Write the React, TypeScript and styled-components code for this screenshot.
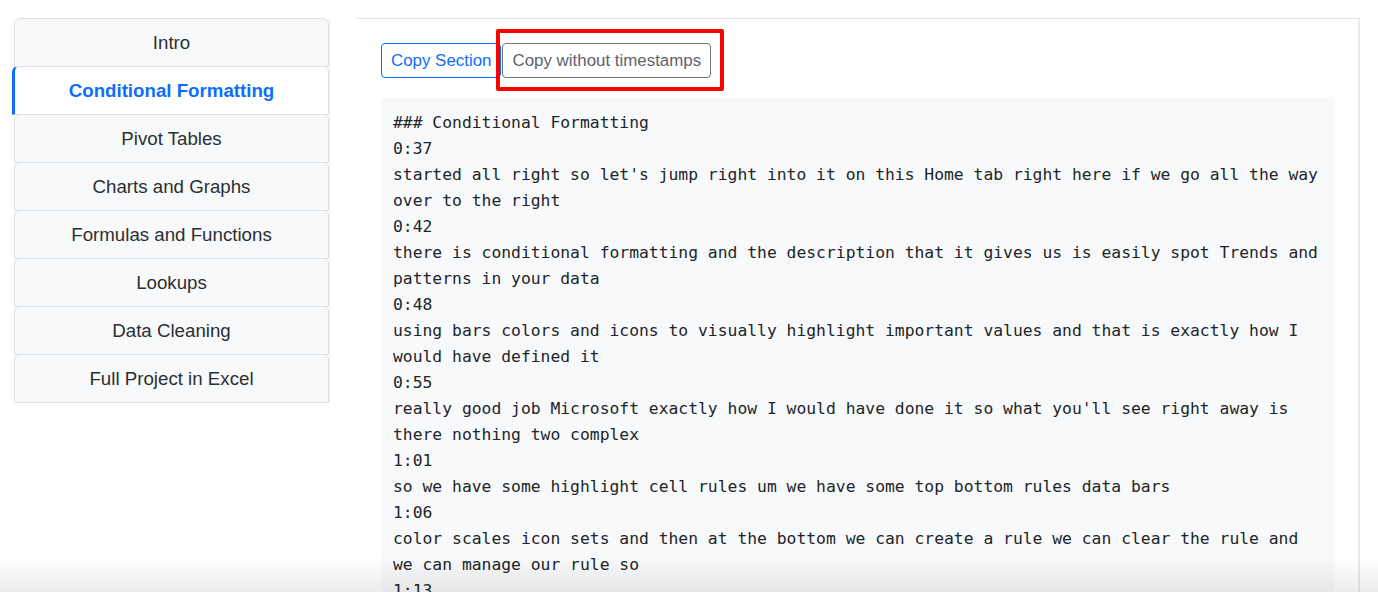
import React from "react";
import styled, { createGlobalStyle } from "styled-components";

const Global = createGlobalStyle`
  html, body {
    margin: 0;
    padding: 0;
    background: #ffffff;
    overflow: hidden;
  }
  body {
    font-family: "Liberation Sans", Arial, sans-serif;
    color: #212529;
  }
`;

const Page = styled.div`
  display: flex;
  align-items: flex-start;
  gap: 28px;
  padding: 18px 0 0 14px;
  height: 574px;
`;

const Sidebar = styled.nav`
  display: flex;
  flex-direction: column;
  width: 315px;
  flex-shrink: 0;
  box-shadow: 2px 0 0 -1px #eceef2;
`;

const TabItem = styled.div<{ $active?: boolean }>`
  display: flex;
  align-items: center;
  justify-content: center;
  box-sizing: content-box;
  height: 46px;
  padding-top: 1px;
  margin-bottom: -1px;
  border: 1px solid #dee2e6;
  border-top-left-radius: 6px;
  border-top-right-radius: 6px;
  background: ${(p) => (p.$active ? "#ffffff" : "#f8f9fa")};
  font-size: 18.7px;
  font-weight: ${(p) => (p.$active ? 700 : 400)};
  color: ${(p) => (p.$active ? "#0d6efd" : "#2b2f33")};
  ${(p) =>
    p.$active
      ? `border-left: 3px solid #0d6efd; margin-left: -2px; position: relative; z-index: 1;`
      : ""}
  &:last-child {
    margin-bottom: 0;
  }
`;

const Main = styled.main`
  width: 1003px;
  height: 100%;
  box-sizing: border-box;
  border-top: 1px solid #dde2e8;
  border-right: 2px solid #e9ecef;
  padding: 24px 23px 0 24px;
  display: flex;
  flex-direction: column;
  gap: 19px;
`;

const ButtonRow = styled.div`
  position: relative;
  display: flex;
  gap: 1px;
`;

const Button = styled.button<{ $variant: "primary" | "secondary" }>`
  height: 35px;
  padding: 2px 9px 0;
  background: #ffffff;
  border: 1px solid ${(p) => (p.$variant === "primary" ? "#0d6efd" : "#6c757d")};
  color: ${(p) => (p.$variant === "primary" ? "#0d6efd" : "#5c636a")};
  border-radius: 4px;
  font-family: "Liberation Sans", Arial, sans-serif;
  font-size: 16.9px;
  line-height: 1;
  cursor: pointer;
`;

const Highlight = styled.div`
  position: absolute;
  left: 115px;
  top: -14px;
  width: 228px;
  height: 62px;
  box-sizing: border-box;
  border: 4px solid #ff0000;
  border-radius: 2px;
  pointer-events: none;
`;

const Transcript = styled.pre`
  margin: 0;
  padding: 13px 12px 12px;
  background: #f8f9fa;
  border-radius: 6px;
  font-family: "DejaVu Sans Mono", "Liberation Mono", monospace;
  font-size: 16.35px;
  line-height: 26px;
  color: #212529;
  white-space: pre;
  overflow: hidden;
  flex: 1;
`;

const BottomFade = styled.div`
  position: fixed;
  left: 0;
  right: 0;
  bottom: 0;
  height: 36px;
  pointer-events: none;
  background: linear-gradient(to bottom, rgba(0, 0, 0, 0), rgba(0, 0, 0, 0.07));
`;

const tabs = [
  "Intro",
  "Conditional Formatting",
  "Pivot Tables",
  "Charts and Graphs",
  "Formulas and Functions",
  "Lookups",
  "Data Cleaning",
  "Full Project in Excel",
];

const lines = [
  "### Conditional Formatting",
  "0:37",
  "started all right so let's jump right into it on this Home tab right here if we go all the way",
  "over to the right",
  "0:42",
  "there is conditional formatting and the description that it gives us is easily spot Trends and",
  "patterns in your data",
  "0:48",
  "using bars colors and icons to visually highlight important values and that is exactly how I",
  "would have defined it",
  "0:55",
  "really good job Microsoft exactly how I would have done it so what you'll see right away is",
  "there nothing two complex",
  "1:01",
  "so we have some highlight cell rules um we have some top bottom rules data bars",
  "1:06",
  "color scales icon sets and then at the bottom we can create a rule we can clear the rule and",
  "we can manage our rule so",
  "1:13",
];

export default function App() {
  return (
    <>
      <Global />
      <Page>
        <Sidebar>
          {tabs.map((t) => (
            <TabItem key={t} $active={t === "Conditional Formatting"}>
              {t}
            </TabItem>
          ))}
        </Sidebar>
        <Main>
          <ButtonRow>
            <Button $variant="primary">Copy Section</Button>
            <Button $variant="secondary">Copy without timestamps</Button>
            <Highlight />
          </ButtonRow>
          <Transcript>{lines.join("\n")}</Transcript>
        </Main>
      </Page>
      <BottomFade />
    </>
  );
}
